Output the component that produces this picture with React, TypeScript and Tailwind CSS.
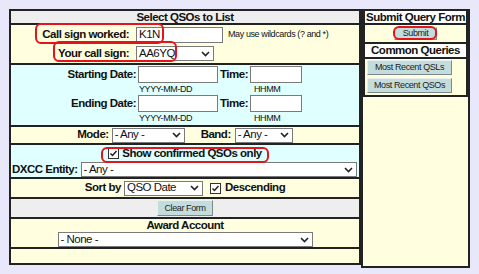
import React from 'react';

const Chevron = () => (
  <svg width="9" height="6" viewBox="0 0 9 6" className="shrink-0">
    <path d="M1 1l3.5 3.5L8 1" fill="none" stroke="#222" strokeWidth="1.6" />
  </svg>
);

const Select: React.FC<{ value: string; className: string }> = ({ value, className }) => (
  <div
    className={`flex items-center justify-between bg-white border border-[#7a7a7a] pl-[2px] pr-[3px] leading-none ${className}`}
  >
    <span className="whitespace-nowrap">{value}</span>
    <Chevron />
  </div>
);

const Check: React.FC = () => (
  <span className="w-[11px] h-[11px] border border-[#333] bg-white flex items-center justify-center shrink-0">
    <svg width="9" height="9" viewBox="0 0 9 9">
      <path d="M1.5 4.5l2 2L7.5 2" fill="none" stroke="#222" strokeWidth="1.5" />
    </svg>
  </span>
);

const Btn: React.FC<{ label: string; className: string }> = ({ label, className }) => (
  <button
    className={`bg-[#c4dcdc] border border-t-[#e8f0f0] border-l-[#e8f0f0] border-r-[#7a8a8a] border-b-[#7a8a8a] text-[9px] tracking-[-0.4px] text-[#222] leading-none ${className}`}
  >
    {label}
  </button>
);

const Mark: React.FC<{ className: string }> = ({ className }) => (
  <div className={`absolute border-2 border-[#e3141c] rounded-[6px] pointer-events-none ${className}`} />
);

const DateLine: React.FC<{ label: string }> = ({ label }) => (
  <div className="flex">
    <div className="w-[125px] text-right font-bold h-[17px] leading-[17px]">{label}</div>
    <div className="ml-[2px] flex flex-col">
      <input className="w-[80px] h-[17px] border border-[#7a7a7a] bg-white" />
      <span className="text-[9px] tracking-[-0.4px] h-[12px] leading-[12px] pl-[1px]">YYYY-MM-DD</span>
    </div>
    <div className="ml-[2px] font-bold h-[17px] leading-[17px]">Time:</div>
    <div className="ml-[2px] flex flex-col">
      <input className="w-[52px] h-[17px] border border-[#7a7a7a] bg-white" />
      <span className="text-[9px] tracking-[-0.4px] h-[12px] leading-[12px] pl-[4px]">HHMM</span>
    </div>
  </div>
);

export default function App() {
  return (
    <div className="relative min-h-screen bg-[#e8e8fa] pt-[9px] pl-[9px] font-['Liberation_Sans',Arial,sans-serif] text-[#111] text-[11.5px] tracking-[-0.5px]">
      <div className="flex items-start">
        {/* query form */}
        <div className="w-[352px] h-[256px] border-2 border-[#222] flex flex-col bg-[#ffffe0]">
          <div className="h-[14px] shrink-0 bg-[#eeeeee] border-b-2 border-[#222] text-center font-bold leading-[12px]">
            Select QSOs to List
          </div>

          <div className="h-[40px] shrink-0 border-b-2 border-[#222] pt-[2px] flex flex-col gap-[3px]">
            <div className="flex items-center h-[16px]">
              <div className="w-[118px] text-right font-bold">Call sign worked:</div>
              <input
                className="ml-[7px] w-[87px] h-[16px] border border-[#7a7a7a] bg-white px-[2px]"
                defaultValue="K1N"
              />
              <span className="ml-[5px] text-[9px] tracking-[-0.4px]">May use wildcards (? and *)</span>
            </div>
            <div className="flex items-center h-[15px]">
              <div className="w-[118px] text-right font-bold">Your call sign:</div>
              <Select value="AA6YQ" className="ml-[7px] w-[78px] h-[15px]" />
            </div>
          </div>

          <div className="h-[62px] shrink-0 bg-[#e0ffff] border-b-2 border-[#222] pt-[1px]">
            <DateLine label="Starting Date:" />
            <DateLine label="Ending Date:" />
          </div>

          <div className="h-[18px] shrink-0 border-b-2 border-[#222] flex items-center justify-center">
            <span className="font-bold">Mode:</span>
            <Select value="- Any -" className="ml-[3px] w-[73px] h-[15px]" />
            <span className="ml-[16px] font-bold">Band:</span>
            <Select value="- Any -" className="ml-[4px] w-[58px] h-[15px]" />
          </div>

          <div className="h-[34px] shrink-0 bg-[#e0ffff] border-b-2 border-[#222] pt-[1px]">
            <div className="h-[15px] flex items-center justify-center">
              <Check />
              <span className="ml-[3px] font-bold">Show confirmed QSOs only</span>
            </div>
            <div className="h-[15px] mt-[1px] flex items-center pl-[1px] pr-[2px]">
              <span className="font-bold">DXCC Entity:</span>
              <Select value="- Any -" className="ml-[3px] flex-1 h-[15px]" />
            </div>
          </div>

          <div className="h-[20px] shrink-0 border-b-2 border-[#222] flex items-center justify-center">
            <span className="font-bold">Sort by</span>
            <Select value="QSO Date" className="ml-[3px] w-[79px] h-[15px]" />
            <span className="ml-[7px]">
              <Check />
            </span>
            <span className="ml-[4px] font-bold">Descending</span>
          </div>

          <div className="h-[20px] shrink-0 bg-[#eeeeee] border-b-2 border-[#222] flex items-center justify-center">
            <Btn label="Clear Form" className="w-[56px] h-[16px]" />
          </div>

          <div className="h-[30px] shrink-0 border-b-2 border-[#222] flex flex-col items-center">
            <div className="h-[13px] leading-[13px] font-bold">Award Account</div>
            <Select value="- None -" className="w-[255px] h-[15px]" />
          </div>

          <div className="flex-1" />
        </div>

        {/* side panel */}
        <div className="w-[109px] h-[259px] border-2 border-[#222] bg-[#ffffe0]">
          <div className="border-x-2 border-b-2 border-[#222]">
            <div className="h-[14px] bg-white border-b-2 border-[#222] text-center font-bold leading-[12px] whitespace-nowrap">
              Submit Query Form
            </div>
            <div className="h-[19px] border-b-2 border-[#222] flex items-center justify-center">
              <Btn label="Submit" className="w-[43px] h-[13px]" />
            </div>
            <div className="h-[15px] bg-white border-b-2 border-[#222] text-center font-bold leading-[13px]">
              Common Queries
            </div>
            <div className="h-[36px] flex flex-col gap-[3px] pl-[2px] pt-[1px]">
              <Btn label="Most Recent QSLs" className="w-[85px] h-[15px]" />
              <Btn label="Most Recent QSOs" className="w-[85px] h-[15px]" />
            </div>
          </div>
        </div>
      </div>

      <Mark className="left-[35px] top-[23px] w-[129px] h-[21px]" />
      <Mark className="left-[53px] top-[41px] w-[124px] h-[21px]" />
      <Mark className="left-[101px] top-[147px] w-[168px] h-[16px]" />
      <Mark className="left-[393px] top-[26px] w-[44px] h-[14px]" />
    </div>
  );
}
